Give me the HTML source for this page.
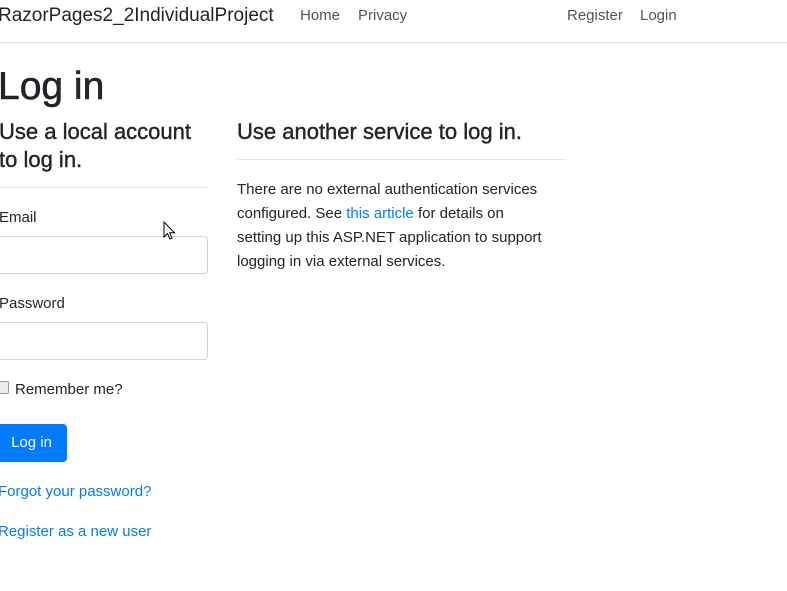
<!DOCTYPE html>
<html><head><style>
body{margin:0;width:787px;height:591px;background:#fff;font-family:"Liberation Sans",sans-serif;color:#212529;position:relative;overflow:hidden}
.a{position:absolute;white-space:nowrap}
a{color:#007bff;text-decoration:none}
.in{position:absolute;left:-5px;width:211px;height:36px;border:1px solid #ced4da;border-radius:4px}
</style></head><body>
<div class="a" style="left:-2px;top:4px;font-size:19px;line-height:24px;color:#212529">RazorPages2_2IndividualProject</div>
<div class="a" style="left:300px;top:6px;font-size:15px;line-height:20px;color:#555">Home</div>
<div class="a" style="left:358px;top:6px;font-size:15px;line-height:20px;color:#555">Privacy</div>
<div class="a" style="left:567px;top:6px;font-size:15px;line-height:20px;color:#555">Register</div>
<div class="a" style="left:640px;top:6px;font-size:15px;line-height:20px;color:#555">Login</div>
<div class="a" style="left:0;top:42px;width:787px;height:1px;background:#e0e0e0"></div>
<div class="a" style="left:-2px;top:64px;font-size:39px;line-height:46px;font-weight:500;-webkit-text-stroke:0.6px #212529">Log in</div>
<div class="a" style="left:-1px;top:118px;font-size:22px;line-height:28px;font-weight:500;-webkit-text-stroke:0.4px #212529">Use a local account<br>to log in.</div>
<div class="a" style="left:0;top:187px;width:207px;height:1px;background:#e5e5e5"></div>
<div class="a" style="left:237px;top:118px;font-size:22px;line-height:28px;font-weight:500;-webkit-text-stroke:0.4px #212529">Use another service to log in.</div>
<div class="a" style="left:237px;top:159px;width:329px;height:1px;background:#e5e5e5"></div>
<div class="a" style="left:237px;top:178px;font-size:15px;line-height:24px">There are no external authentication services<br>configured. See <a>this article</a> for details on<br>setting up this ASP.NET application to support<br>logging in via external services.</div>
<div class="a" style="left:-1px;top:208px;font-size:15px;line-height:20px">Email</div>
<div class="in" style="top:236px"></div>
<div class="a" style="left:-1px;top:294px;font-size:15px;line-height:20px">Password</div>
<div class="in" style="top:322px"></div>
<div class="a" style="left:-4px;top:381px;width:11px;height:11px;border:1px solid #999;border-radius:2px;background:#eee"></div>
<div class="a" style="left:15px;top:380px;font-size:15px;line-height:20px">Remember me?</div>
<div class="a" style="left:-5px;top:424px;width:72px;height:38px;background:#007bff;border-radius:4px;color:#fff;font-size:15px;line-height:38px;text-align:center;padding-left:1px;box-sizing:border-box">Log in</div>
<div class="a" style="left:-2px;top:482px;font-size:15px;line-height:20px"><a>Forgot your password?</a></div>
<div class="a" style="left:-2px;top:522px;font-size:15px;line-height:20px"><a>Register as a new user</a></div>
<svg class="a" style="left:163px;top:221px" width="14" height="20" viewBox="0 0 14 20"><path d="M1 1 L1 16 L4.5 12.5 L7 18 L9 17 L6.7 11.8 L11.5 11.8 Z" fill="#fff" stroke="#000" stroke-width="1"/></svg>
</body></html>
